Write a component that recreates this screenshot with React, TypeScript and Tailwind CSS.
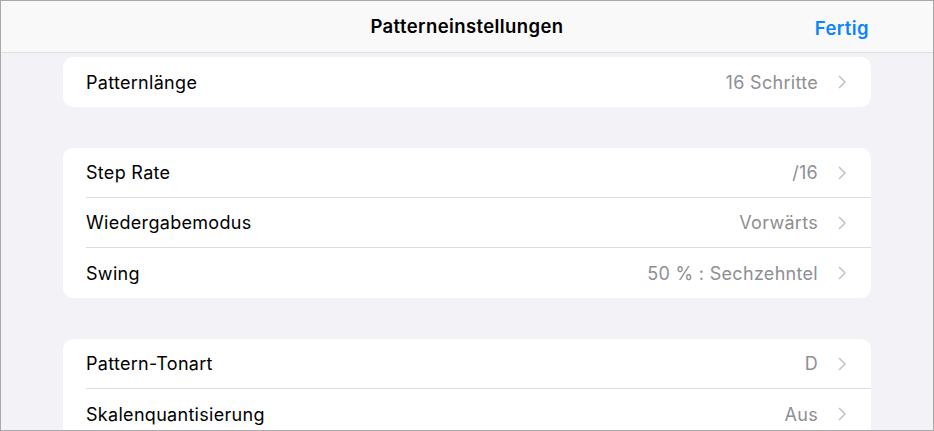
const font = { fontFamily: 'Inter, "Noto Sans", "Liberation Sans", sans-serif' };

type Row = { label: string; value: string };

const groups: Row[][] = [
  [{ label: 'Patternlänge', value: '16 Schritte' }],
  [
    { label: 'Step Rate', value: '/16' },
    { label: 'Wiedergabemodus', value: 'Vorwärts' },
    { label: 'Swing', value: '50 % : Sechzehntel' },
  ],
  [
    { label: 'Pattern-Tonart', value: 'D' },
    { label: 'Skalenquantisierung', value: 'Aus' },
  ],
];

function Chevron() {
  return (
    <svg width="9" height="14" viewBox="0 0 9 14" fill="none" className="shrink-0">
      <path d="M1.5 1.5 L7 7 L1.5 12.5" stroke="#c4c4c7" strokeWidth="1.7" strokeLinecap="round" strokeLinejoin="round" />
    </svg>
  );
}

function SettingRow({ row, last }: { row: Row; last: boolean }) {
  return (
    <div className="flex h-[50px] items-center pl-[23px]">
      <div className={`flex h-full flex-1 items-center pr-[24px] ${last ? '' : 'border-b border-[#dcdcdf]'}`}>
        <span className="flex-1 text-[18px] tracking-[0.3px] text-black">{row.label}</span>
        <span className="text-[18px] tracking-[0.3px] text-[#8e8e93]">{row.value}</span>
        <span className="ml-[20px]">
          <Chevron />
        </span>
      </div>
    </div>
  );
}

export default function App() {
  return (
    <div className="h-[431px] w-[934px] overflow-hidden border border-[#a9a9a9] bg-[#f2f2f7]" style={font}>
      <div className="relative flex h-[52px] items-center justify-center border-b border-[#dedee2] bg-[#f9f9f9]">
        <span className="text-[18.5px] font-semibold tracking-[0.4px] text-black">Patterneinstellungen</span>
        <span className="absolute right-[64px] top-[14px] text-[18.5px] font-semibold tracking-[0.4px] text-[#0a84ff]">Fertig</span>
      </div>
      <div className="flex flex-col gap-[41px] px-[62px] pt-[4px]">
        {groups.map((g, i) => (
          <div key={i} className="overflow-hidden rounded-[10px] bg-white">
            {g.map((r, j) => (
              <SettingRow key={r.label} row={r} last={j === g.length - 1} />
            ))}
          </div>
        ))}
      </div>
    </div>
  );
}
